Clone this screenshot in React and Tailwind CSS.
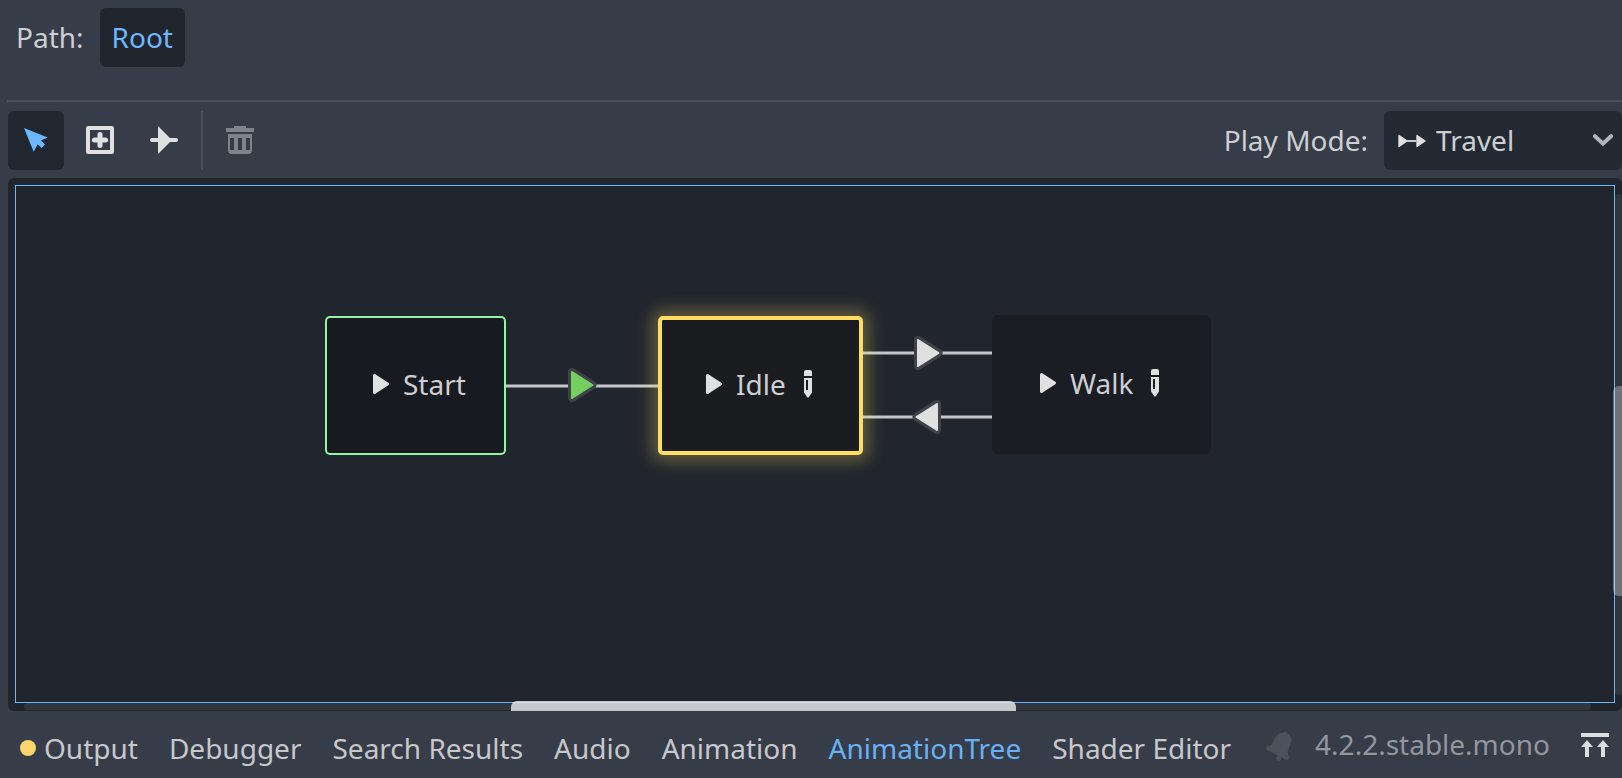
import React from "react";

function SelectIcon() {
  return (
    <svg width="28" height="28" viewBox="0 0 28 28" fill="#6cb8ff" aria-hidden="true">
      <path d="M2 2 L25.7 11.4 L19 14.4 L23 18.6 L19.6 22 L15.6 18.2 L11.7 25.7 Z" />
    </svg>
  );
}

function AddNodeIcon() {
  return (
    <svg width="28" height="28" viewBox="0 0 28 28" aria-hidden="true">
      <rect x="2" y="2" width="24" height="24" rx="0.5" fill="none" stroke="#e0e0e0" strokeWidth="4" />
      <path d="M14 8.4V19.6M8.4 14H19.6" stroke="#e0e0e0" strokeWidth="5" strokeLinecap="round" />
    </svg>
  );
}

function ConnectIcon() {
  return (
    <svg width="28" height="28" viewBox="0 0 28 28" fill="#e0e0e0" aria-hidden="true">
      <path d="M2 12H8V0L20 12H26A2 2 0 0 1 26 16H20L8 28V16H2A2 2 0 0 1 2 12Z" />
    </svg>
  );
}

function TrashIcon() {
  return (
    <svg width="28" height="28" viewBox="0 0 28 28" fill="#7f838b" aria-hidden="true">
      <path d="M8 0H20V2H28V6H0V2H8Z" />
      <path
        fillRule="evenodd"
        d="M2 8H26V24A4 4 0 0 1 22 28H6A4 4 0 0 1 2 24ZM4 12V24H8V12ZM12 12V24H16V12ZM20 12V24H24V12Z"
      />
    </svg>
  );
}

function TravelIcon() {
  return (
    <svg width="28" height="14" viewBox="0 0 28 14" aria-hidden="true">
      <path d="M9 7H18" stroke="#c9cacc" strokeWidth="2" />
      <path d="M1 1.5L9 7L1 12.5ZM19 1.5L27 7L19 12.5Z" fill="#e0e0e0" stroke="#e0e0e0" strokeWidth="1.4" strokeLinejoin="round" />
    </svg>
  );
}

function ChevronIcon() {
  return (
    <svg width="20" height="13" viewBox="0 0 20 13" fill="none" aria-hidden="true">
      <path d="M2 2.200L10 9.6L18 2.200" stroke="#b4b6ba" strokeWidth="4" strokeLinecap="round" />
    </svg>
  );
}

function PlayIcon() {
  return (
    <svg width="16" height="20" viewBox="0 0 16 20" aria-hidden="true">
      <path d="M1.5 1.5L14.5 10L1.5 18.5Z" fill="#e0e0e0" stroke="#e0e0e0" strokeWidth="3" strokeLinejoin="round" />
    </svg>
  );
}

function PencilIcon() {
  return (
    <svg width="8" height="28" viewBox="0 0 8 28" fill="#e0e0e0" aria-hidden="true">
      <path d="M0 6V2A2 2 0 0 1 2 0H6A2 2 0 0 1 8 2V6Z" />
      <path fillRule="evenodd" d="M0 8H8V22.5L4.6 27.6H3.4L0 22.5ZM2 10V20H4V10Z" />
    </svg>
  );
}

function BellIcon() {
  return (
    <svg width="26" height="30" viewBox="0 0 26 30" fill="#4c515b" aria-hidden="true">
      <path d="M10.500 5Q13 1.400 17.600 1.600Q19.800 -0.400 21.600 2.400Q26 5 25.300 10.500Q24.800 13.500 22.600 17.500Q21 20.500 22.400 24.400Q23.200 26.300 22.400 28.200Q21 29.200 19 28.200L1 18.800Q-0.600 17.400 0.800 15.600Q5.600 14.800 6.900 11.500Q8 8 10.500 5Z" />
      <circle cx="12.600" cy="27.300" r="2.500" />
    </svg>
  );
}

function ExpandIcon() {
  return (
    <svg width="28" height="24" viewBox="0 0 28 24" fill="#dcdddf" aria-hidden="true">
      <path d="M0 0H28V4H0Z" />
      <path d="M6 7L12 14H8V24H4V14H0ZM22 7L28 14H24V24H20V14H16Z" />
    </svg>
  );
}

function Arrow({ x, y, fill, flip }) {
  return (
    <g transform={`translate(${x} ${y})${flip ? " scale(-1 1)" : ""}`} strokeLinejoin="round">
      <path d="M-10 -13L10.500 0L-10 13Z" fill="#414247" stroke="#414247" strokeWidth="8" />
      <path d="M-10 -13L10.500 0L-10 13Z" fill={fill} stroke={fill} strokeWidth="2" />
    </g>
  );
}

function Edges() {
  return (
    <svg className="absolute inset-0 h-full w-full" aria-hidden="true">
      <g stroke="#c6c7cc" strokeWidth="3">
        <path d="M498 208H650M854 175H984M854 239H984" />
      </g>
      <Arrow x={574} y={207} fill="#74cf61" />
      <Arrow x={920} y={175} fill="#e0e0e0" />
      <Arrow x={919} y={239} fill="#e0e0e0" flip />
    </svg>
  );
}

function StateNode({ label, editable, className }) {
  return (
    <div className={`absolute flex h-[139px] items-center pb-1 ${className}`}>
      <button type="button" aria-label={`Play ${label}`}>
        <PlayIcon />
      </button>
      <span className="ml-3.5">{label}</span>
      {editable && (
        <button type="button" className="ml-[18px]" aria-label={`Edit ${label}`}>
          <PencilIcon />
        </button>
      )}
    </div>
  );
}

function Tool({ label, active, disabled, children }) {
  return (
    <button
      type="button"
      aria-label={label}
      aria-pressed={active}
      disabled={disabled}
      className={`flex h-[59px] w-14 items-center justify-center rounded-md pb-px ${active ? "bg-[#212730]" : ""}`}
    >
      {children}
    </button>
  );
}

const tabs = ["Debugger", "Search Results", "Audio", "Animation", "AnimationTree", "Shader Editor"];

export default function App() {
  return (
    <div className="flex min-h-screen flex-col bg-[#363c48] font-['Noto_Sans',sans-serif] text-[28px] leading-[38px] text-[#cdcfd2]">
      <nav className="flex items-center pt-2 pl-4" aria-label="Path">
        <span className="pb-0.5">Path:</span>
        <button type="button" className="ml-4 h-[59px] rounded-md bg-[#21262e] px-3 pb-0.5 text-[#6cb8ff]">
          Root
        </button>
      </nav>

      <hr className="mt-[33px] ml-[7px] border-t-2 border-[#4a4f5b]" />

      <div className="mt-[9px] flex items-center pl-2">
        <div className="flex gap-2">
          <Tool label="Select and move nodes" active>
            <SelectIcon />
          </Tool>
          <Tool label="Create new nodes">
            <AddNodeIcon />
          </Tool>
          <Tool label="Connect nodes">
            <ConnectIcon />
          </Tool>
          <div className="mx-px h-[59px] w-0.5 bg-[#4a4f5b]" />
          <Tool label="Remove selected" disabled>
            <TrashIcon />
          </Tool>
        </div>
        <label htmlFor="play-mode" className="ml-auto pb-0.5">
          Play Mode:
        </label>
        <div className="relative ml-4">
          <select
            id="play-mode"
            defaultValue="Travel"
            className="block h-[59px] w-[238px] appearance-none rounded-md bg-[#242a33] pb-0.5 pl-[52px] outline-none"
          >
            <option>Travel</option>
            <option>Immediate</option>
          </select>
          <span className="pointer-events-none absolute inset-y-0 left-3.5 flex items-center">
            <TravelIcon />
          </span>
          <span className="pointer-events-none absolute inset-y-0 right-[9px] flex items-center pb-px">
            <ChevronIcon />
          </span>
        </div>
      </div>

      <main className="relative mt-2 ml-2 min-h-[400px] flex-1 overflow-hidden rounded-md bg-[#21252d]">
        <Edges />
        <StateNode label="Start" className="top-[138px] left-[317px] w-[181px] rounded-[5px] border-2 border-[#93f5a0] bg-[#171a20] pl-[46px]" />
        <StateNode
          label="Idle"
          editable
          className="top-[138px] left-[650px] w-[205px] rounded-[5px] border-4 border-[#ffdd65] bg-[#1b1c1f] pl-11 shadow-[0_0_16px_7px_rgba(255,221,101,0.28)]"
        />
        <StateNode label="Walk" editable className="top-[137px] left-[984px] w-[219px] rounded-md bg-[#1a1d23] pl-12" />

        <div className="absolute bottom-px left-4 right-[31px] h-[7px] rounded-sm bg-[#31363d]" />
        <div className="absolute top-4 right-0 bottom-4 w-[7px] rounded-sm bg-[#31363d]" />
        <div className="pointer-events-none absolute top-[7px] right-[7px] bottom-2 left-[7px] border border-[#6cb8ff]" />
        <div className="absolute bottom-0 left-[503px] h-2.5 w-[505px] rounded-t-md bg-[#ededed]/80" />
        <div className="absolute top-[208px] right-0 h-[210px] w-[9px] rounded-l-md bg-white/30" />
      </main>

      <footer className="flex h-[67px] items-center pl-5">
        <div className="flex gap-[31px] pt-1.5 text-[#c6c8cb]">
          <button type="button" className="flex items-center gap-2">
            <span className="size-4 rounded-full bg-[#f8d66d]" />
            Output
          </button>
          {tabs.map((tab) => (
            <button key={tab} type="button" className={tab === "AnimationTree" ? "text-[#68b1f4]" : ""}>
              {tab}
            </button>
          ))}
        </div>
        <div className="ml-auto flex items-center pr-[13px]">
          <button type="button" className="pt-0.5" aria-label="Notifications">
            <BellIcon />
          </button>
          <button type="button" className="ml-[23px] pb-0.5 text-[#93969d]">
            4.2.2.stable.mono
          </button>
          <button type="button" className="ml-[31px] pt-px" aria-label="Expand bottom panel">
            <ExpandIcon />
          </button>
        </div>
      </footer>
    </div>
  );
}
